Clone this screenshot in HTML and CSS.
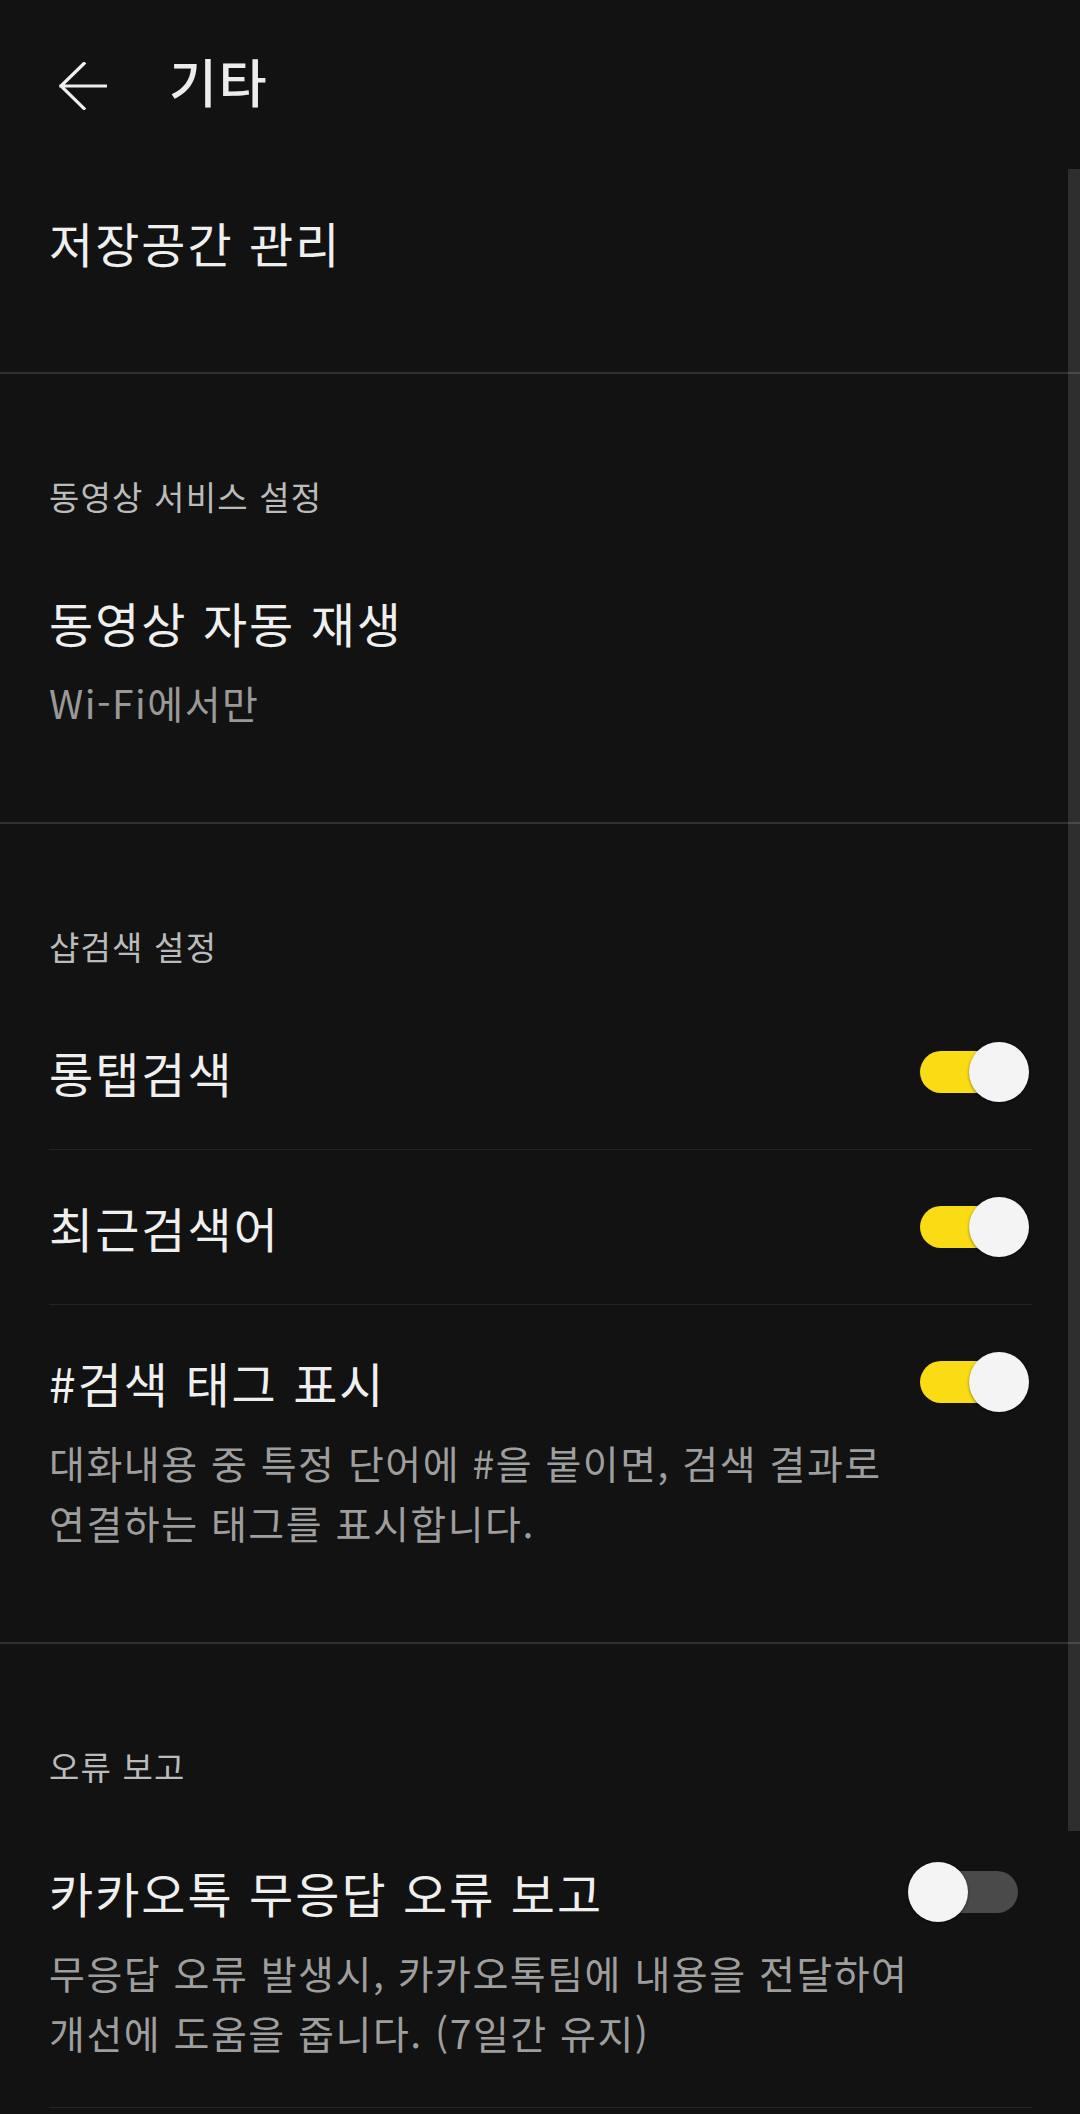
FILE: index.html
```html
<!DOCTYPE html>
<html lang="ko">
<head>
    <meta charset="UTF-8">
    <meta name="viewport" content="width=device-width, initial-scale=1.0">
    <title>기타</title>
    <link rel="stylesheet" href="styles.css">
</head>
<body>
    <header class="topbar">
        <svg class="back" viewBox="0 0 48 48" width="48" height="48" aria-hidden="true">
            <path d="M2 24 H47 M2 24 L25 1.5 M2 24 L25 46.5" fill="none" stroke="#eeeeee" stroke-width="3.2" stroke-linecap="square"/>
        </svg>
        <h1>기타</h1>
    </header>

    <div class="scrollbar"></div>

    <section class="section first">
        <div class="row">
            <div class="text">
                <div class="title">저장공간 관리</div>
            </div>
        </div>
    </section>

    <section class="section">
        <div class="section-title">동영상 서비스 설정</div>
        <div class="row">
            <div class="text">
                <div class="title">동영상 자동 재생</div>
                <div class="sub value">Wi-Fi에서만</div>
            </div>
        </div>
    </section>

    <section class="section">
        <div class="section-title">샵검색 설정</div>
        <div class="row line">
            <div class="text">
                <div class="title">롱탭검색</div>
            </div>
            <span class="toggle on"><span class="knob"></span></span>
        </div>
        <div class="row line">
            <div class="text">
                <div class="title">최근검색어</div>
            </div>
            <span class="toggle on"><span class="knob"></span></span>
        </div>
        <div class="row top">
            <div class="text">
                <div class="title">#검색 태그 표시</div>
                <div class="sub">대화내용 중 특정 단어에 #을 붙이면, 검색 결과로<br>연결하는 태그를 표시합니다.</div>
            </div>
            <span class="toggle on"><span class="knob"></span></span>
        </div>
    </section>

    <section class="section last">
        <div class="section-title">오류 보고</div>
        <div class="row top line">
            <div class="text">
                <div class="title">카카오톡 무응답 오류 보고</div>
                <div class="sub">무응답 오류 발생시, 카카오톡팀에 내용을 전달하여<br>개선에 도움을 줍니다. (7일간 유지)</div>
            </div>
            <span class="toggle"><span class="knob"></span></span>
        </div>
    </section>
</body>
</html>
```

FILE: styles.css
```css
/* Reset */
* {
    margin: 0;
    padding: 0;
    box-sizing: border-box;
}

body {
    font-family: "Noto Sans CJK KR", "Noto Sans", sans-serif;
    background-color: #121212;
    color: #efefef;
    width: 1080px;
    overflow: hidden;
}

/* Barra superior */
.topbar {
    height: 170px;
    display: flex;
    align-items: center;
    padding-left: 59px;
}

.back {
    display: block;
    margin-top: 1px;
}

.topbar h1 {
    font-size: 52px;
    font-weight: 500;
    line-height: 64px;
    letter-spacing: 2px;
    margin-left: 62px;
    margin-bottom: 8px;
    color: #ececec;
}

/* Barra de rolagem por cima */
.scrollbar {
    position: absolute;
    top: 169px;
    right: 0;
    width: 12px;
    height: 1662px;
    background: rgba(255, 255, 255, 0.12);
}

/* Secoes */
.section {
    padding: 100px 48px 45px 49px;
    border-bottom: 2px solid #303030;
}

.section.first {
    padding-top: 0;
    padding-bottom: 48px;
}

.section.first .row {
    padding: 40px 0 50px;
}

.section.last {
    border-bottom: none;
}

.section-title {
    font-size: 33px;
    line-height: 44px;
    letter-spacing: 1.2px;
    color: #bbbbbb;
    margin-bottom: 27px;
}

/* Linhas */
.row {
    display: flex;
    align-items: center;
    justify-content: space-between;
    padding: 45px 0;
}

.row.top {
    align-items: flex-start;
}

.row.line {
    border-bottom: 1px solid #242424;
}

.title {
    font-size: 48px;
    line-height: 64px;
    letter-spacing: 2px;
    color: #efefef;
}

.sub {
    font-size: 39px;
    line-height: 60px;
    letter-spacing: 1.5px;
    color: #9e9e9e;
    margin-top: 18px;
}

.sub.value {
    color: #999999;
}

/* Interruptor */
.toggle {
    position: relative;
    flex: none;
    width: 98px;
    height: 42px;
    border-radius: 21px;
    background-color: #4a4a4a;
    margin-right: 14px;
}

.row.top .toggle {
    margin-top: 11px;
}

.toggle.on {
    background-color: #fadc14;
}

.knob {
    position: absolute;
    top: -9px;
    left: -12px;
    width: 60px;
    height: 60px;
    border-radius: 50%;
    background-color: #f4f4f4;
    box-shadow: 0 1px 3px rgba(0, 0, 0, 0.45);
}

.toggle.on .knob {
    left: auto;
    right: -11px;
}
```
